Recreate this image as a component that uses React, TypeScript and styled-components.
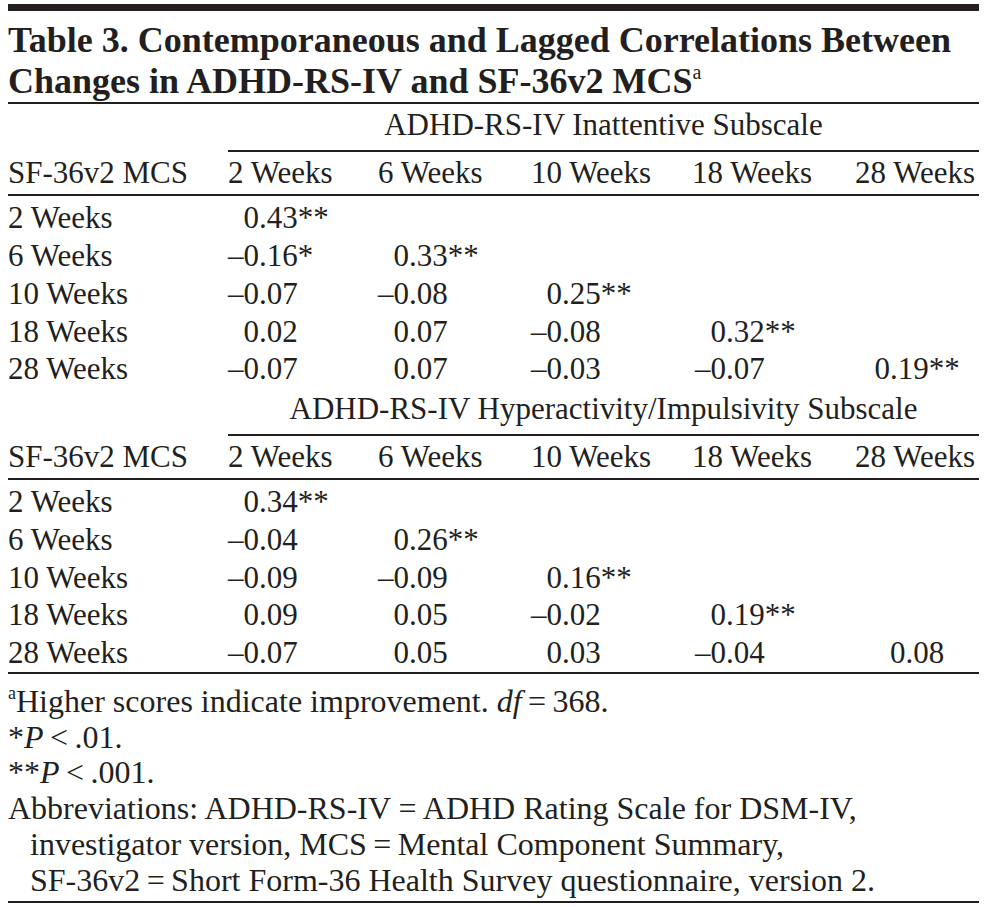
import styled, { createGlobalStyle } from 'styled-components';

const GlobalStyle = createGlobalStyle`
  body {
    margin: 0;
    background: #ffffff;
  }
`;

type Block = {
  title: string;
  rows: { label: string; values: string[] }[];
};

const WEEKS = ['2 Weeks', '6 Weeks', '10 Weeks', '18 Weeks', '28 Weeks'];

const BLOCKS: Block[] = [
  {
    title: 'ADHD-RS-IV Inattentive Subscale',
    rows: [
      { label: '2 Weeks', values: ['0.43**'] },
      { label: '6 Weeks', values: ['–0.16*', '0.33**'] },
      { label: '10 Weeks', values: ['–0.07', '–0.08', '0.25**'] },
      { label: '18 Weeks', values: ['0.02', '0.07', '–0.08', '0.32**'] },
      { label: '28 Weeks', values: ['–0.07', '0.07', '–0.03', '–0.07', '0.19**'] },
    ],
  },
  {
    title: 'ADHD-RS-IV Hyperactivity/Impulsivity Subscale',
    rows: [
      { label: '2 Weeks', values: ['0.34**'] },
      { label: '6 Weeks', values: ['–0.04', '0.26**'] },
      { label: '10 Weeks', values: ['–0.09', '–0.09', '0.16**'] },
      { label: '18 Weeks', values: ['0.09', '0.05', '–0.02', '0.19**'] },
      { label: '28 Weeks', values: ['–0.07', '0.05', '0.03', '–0.04', '0.08'] },
    ],
  },
];

const ValueCell = ({ raw, index }: { raw: string; index: number }) => {
  const negative = raw.startsWith('–');
  const stars = (raw.match(/\*+$/) || [''])[0];
  const number = raw.replace(/^–/, '').replace(/\*+$/, '');

  if (index === 4) {
    return (
      <Value $center>
        {number}
        {stars}
      </Value>
    );
  }

  return (
    <Value $shift={index === 3 ? 3 : 0}>
      <Sign>{negative ? '–' : ''}</Sign>
      {number}
      {stars}
    </Value>
  );
};

const TableBlock = ({ block }: { block: Block }) => {
  return (
    <div>
      <Row>
        <span />
        <Subscale>{block.title}</Subscale>
      </Row>
      <HeadRow>
        <Cell>SF-36v2 MCS</Cell>
        {WEEKS.map((w) => (
          <Cell key={w}>{w}</Cell>
        ))}
      </HeadRow>
      <Body>
        {block.rows.map((r) => (
          <Row key={r.label}>
            <Cell>{r.label}</Cell>
            {r.values.map((v, i) => (
              <ValueCell key={i} raw={v} index={i} />
            ))}
          </Row>
        ))}
      </Body>
    </div>
  );
};

const App = () => {
  return (
    <>
      <GlobalStyle />
      <Page>
        <TopRule />
        <Title>
          Table 3. Contemporaneous and Lagged Correlations Between
          <br />
          Changes in ADHD-RS-IV and SF-36v2 MCS<TitleSup>a</TitleSup>
        </Title>

        <Tables>
          {BLOCKS.map((b) => (
            <TableBlock key={b.title} block={b} />
          ))}
        </Tables>

        <Notes>
          <NoteLine>
            <NoteSup>a</NoteSup>Higher scores indicate improvement. <em>df</em>
            {'\u2009=\u2009'}368.
          </NoteLine>
          <NoteLine>
            *<em>P</em>
            {'\u2009<\u2009'}.01.
          </NoteLine>
          <NoteLine>
            **<em>P</em>
            {'\u2009<\u2009'}.001.
          </NoteLine>
          <NoteLine>Abbreviations: ADHD-RS-IV = ADHD Rating Scale for DSM-IV,</NoteLine>
          <NoteLine $indent>
            investigator version, MCS{'\u2009=\u2009'}Mental Component Summary,
          </NoteLine>
          <NoteLine $indent>
            SF-36v2{'\u2009=\u2009'}Short Form-36 Health Survey questionnaire, version 2.
          </NoteLine>
        </Notes>
      </Page>
    </>
  );
};

export default App;

const INK = '#231f20';

const Page = styled.div`
  width: 971px;
  padding: 4px 0 0 8px;
  font-family: 'Liberation Serif', 'Times New Roman', serif;
  color: ${INK};
`;

const TopRule = styled.div`
  height: 7px;
  background: ${INK};
`;

const Title = styled.h1`
  margin: 9px 0 0;
  font-size: 36px;
  line-height: 41px;
  font-weight: 700;
  border-bottom: 2px solid ${INK};
`;

const TitleSup = styled.sup`
  font-size: 20px;
  font-weight: 400;
  vertical-align: 14px;
  line-height: 0;
`;

const Tables = styled.div`
  font-size: 31px;
  line-height: 37.7px;
`;

const Row = styled.div`
  display: grid;
  grid-template-columns: 220px 150px 153px 161px 163px 124px;
  white-space: nowrap;
`;

const HeadRow = styled(Row)`
  padding: 2px 0 3px;
  border-bottom: 2px solid ${INK};
`;

const Subscale = styled.div`
  grid-column: 2 / -1;
  text-align: center;
  padding: 2px 0 6px;
  border-bottom: 2px solid ${INK};
`;

const Body = styled.div`
  padding-top: 3px;
`;

const Cell = styled.div`
  text-align: left;
`;

const Value = styled.div<{ $center?: boolean; $shift?: number }>`
  text-align: ${({ $center }) => ($center ? 'center' : 'left')};
  padding-left: ${({ $shift }) => $shift || 0}px;
`;

const Sign = styled.span`
  display: inline-block;
  width: 15.5px;
`;

const Notes = styled.div`
  padding: 10px 0 2px;
  border-top: 2px solid ${INK};
  border-bottom: 2px solid ${INK};
  font-size: 32px;
  line-height: 35.8px;
  white-space: nowrap;

  em {
    font-style: italic;
  }
`;

const NoteLine = styled.div<{ $indent?: boolean }>`
  padding-left: ${({ $indent }) => ($indent ? '22px' : '0')};
`;

const NoteSup = styled.sup`
  font-size: 18px;
  vertical-align: 13px;
  line-height: 0;
`;
